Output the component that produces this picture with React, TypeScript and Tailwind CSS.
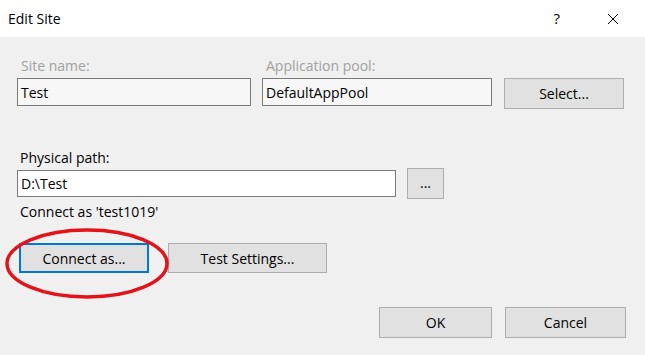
export default function App() {
  const btn =
    "flex items-center justify-center border border-[#adadad] bg-[#e1e1e1] text-[14px] text-black";
  return (
    <div className="relative flex h-[355px] w-[645px] flex-col overflow-hidden bg-[#f0f0f0] font-['Open_Sans',sans-serif] text-black">
      {/* title bar */}
      <div className="flex h-[37px] shrink-0 items-center bg-white pl-[8px] text-[14px]">
        <span>Edit Site</span>
        <span className="ml-auto mr-[47px] text-[15px]">?</span>
        <svg width="12" height="12" viewBox="0 0 12 12" className="mr-[26px]">
          <path d="M1 1L11 11M11 1L1 11" stroke="#000" strokeWidth="1" />
        </svg>
      </div>

      <div className="flex flex-col pl-[17px] pt-[21px] text-[14px]">
        <div className="flex">
          <div className="flex w-[234px] flex-col">
            <span className="h-[16px] pl-[4px] leading-[16px] text-[#a0a0a0]">Site name:</span>
            <div className="mt-[4px] flex h-[28px] items-center border border-[#7a7a7a] bg-[#f7f7f7] pl-[3px]">
              Test
            </div>
          </div>
          <div className="ml-[11px] flex w-[230px] flex-col">
            <span className="h-[16px] pl-[4px] leading-[16px] text-[#a0a0a0]">Application pool:</span>
            <div className="mt-[4px] flex h-[28px] items-center border border-[#7a7a7a] bg-[#f7f7f7] pl-[3px]">
              DefaultAppPool
            </div>
          </div>
          <button className={`${btn} ml-[12px] mt-[20px] h-[31px] w-[120px]`}>Select...</button>
        </div>

        <span className="mt-[41px] h-[16px] pl-[3px] leading-[16px]">Physical path:</span>
        <div className="mt-[2px] flex items-center">
          <div className="flex h-[27px] w-[379px] items-center border border-[#7a7a7a] bg-white pl-[3px]">
            D:\Test
          </div>
          <button className={`${btn} ml-[11px] h-[31px] w-[37px] pb-[3px] text-[11px]`}>...</button>
        </div>

        <span className="mt-[5px] h-[16px] pl-[3px] leading-[16px]">Connect as 'test1019'</span>

        <div className="mt-[23px] flex items-center">
          <button className="ml-[2px] flex h-[30px] w-[130px] items-center justify-center border-2 border-[#0078d7] bg-[#e1e1e1] text-[14px]">
            Connect as...
          </button>
          <button className={`${btn} ml-[19px] h-[30px] w-[159px]`}>Test Settings...</button>
        </div>
      </div>

      <div className="mt-[34px] flex justify-end gap-[13px] pr-[19px]">
        <button className={`${btn} h-[31px] w-[113px]`}>OK</button>
        <button className={`${btn} h-[31px] w-[121px]`}>Cancel</button>
      </div>

      {/* red annotation ellipse */}
      <svg className="absolute left-[5px] top-[228px]" width="164" height="71" viewBox="0 0 164 71">
        <ellipse cx="82" cy="35.5" rx="80" ry="33.5" fill="none" stroke="#e3131b" strokeWidth="3.5" />
      </svg>
    </div>
  );
}
